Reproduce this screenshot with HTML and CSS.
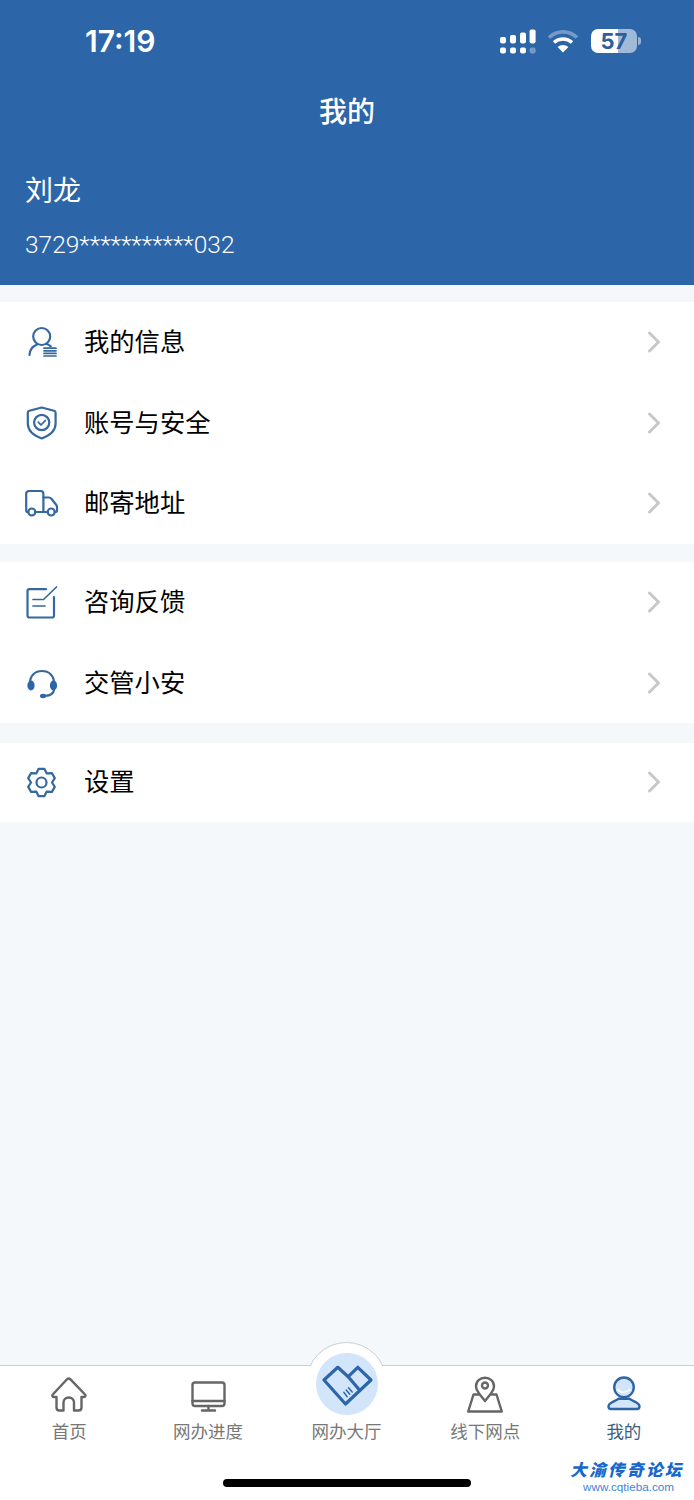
FILE: index.html
```html
<!DOCTYPE html>
<html lang="zh-CN">
<head>
  <meta charset="UTF-8" />
  <meta name="viewport" content="width=device-width, initial-scale=1.0" />
  <title>我的</title>
  <link rel="stylesheet" href="styles.css">
</head>
<body>

  <header class="header">
    <div class="status-bar">
      <span class="time">17:19</span>
      <div class="status-icons">
        <svg class="signal" width="36" height="25" viewBox="0 0 36 25" fill="#fff">
          <rect x="0" y="8" width="6" height="6.4" rx="1.8"/>
          <rect x="10" y="6" width="6" height="8.4" rx="1.8"/>
          <rect x="20" y="3.6" width="6" height="10.8" rx="1.8"/>
          <rect x="29.6" y="0.4" width="6" height="14" rx="1.8"/>
          <rect x="0" y="18.6" width="6" height="5.8" rx="1.8"/>
          <rect x="10" y="18.6" width="6" height="5.8" rx="1.8"/>
          <rect x="20" y="18.6" width="6" height="5.8" rx="1.8"/>
          <rect x="29.6" y="18.6" width="6" height="5.8" rx="1.8" opacity="0.35"/>
        </svg>
        <svg class="wifi" width="32" height="24" viewBox="0 0 32 24" fill="none">
          <path d="M2 8.5C10 1 22 1 30 8.5" stroke="#fff" stroke-opacity="0.35" stroke-width="3.6"/>
          <path d="M7 13.5C12 8.8 20 8.8 25 13.5" stroke="#fff" stroke-width="3.4"/>
          <path d="M16 23.5L10.6 18C13.6 15.2 18.4 15.2 21.4 18Z" fill="#fff"/>
        </svg>
        <div class="battery"><span class="battery-num">57</span></div>
        <span class="battery-nub"></span>
      </div>
    </div>
    <h1 class="title">我的</h1>
    <div class="user-name">刘龙</div>
    <div class="user-id">3729***********032</div>
  </header>

  <main class="content">
    <section class="group">
      <a class="row">
        <svg class="row-icon" viewBox="0 0 36 36" fill="none">
          <circle cx="17.7" cy="12.5" r="8.5"/>
          <path d="M5.5 31C5.5 26 8.5 22.5 13 20.5M22.5 20C24 20.5 25.5 21.4 26.8 22.4"/>
          <path class="thin" d="M20 24.2H32M20 26.8H32M20 29.4H32M20 32H32"/>
        </svg>
        <span class="row-label">我的信息</span>
        <svg class="chevron" width="14" height="22" viewBox="0 0 14 22"><path d="M2.5 2L11.5 11L2.5 20"/></svg>
      </a>
      <a class="row">
        <svg class="row-icon" viewBox="0 0 36 36" fill="none">
          <path d="M17.7 2.5L30 5.8C31 6.1 31.6 6.8 31.6 7.8V18.5C31.6 26 25 30.8 17.7 33.5C10.4 30.8 3.8 26 3.8 18.5V7.8C3.8 6.8 4.4 6.1 5.4 5.8Z"/>
          <circle cx="17.7" cy="17.5" r="7.6"/>
          <path class="thin" d="M14.2 17.2L17 20L21.4 15.4"/>
        </svg>
        <span class="row-label">账号与安全</span>
        <svg class="chevron" width="14" height="22" viewBox="0 0 14 22"><path d="M2.5 2L11.5 11L2.5 20"/></svg>
      </a>
      <a class="row">
        <svg class="row-icon" viewBox="0 0 36 36" fill="none">
          <path d="M4.2 27H3.8C2.8 27 2.2 26.2 2.2 25.2V9C2.2 7 3.4 6 5.2 6H16.5C18.2 6 19.4 7 19.4 9V27H11.4"/>
          <path d="M19.4 12.5H25C26 12.5 26.8 13 27.4 13.8L32 19.5C32.6 20.3 33 21 33 22V25.2C33 26.4 32.2 27 31 27M23.5 27H19.4"/>
          <circle cx="7.8" cy="27" r="3.5"/>
          <circle cx="27.2" cy="27" r="3.5"/>
        </svg>
        <span class="row-label">邮寄地址</span>
        <svg class="chevron" width="14" height="22" viewBox="0 0 14 22"><path d="M2.5 2L11.5 11L2.5 20"/></svg>
      </a>
    </section>

    <section class="group">
      <a class="row">
        <svg class="row-icon" viewBox="0 0 36 36" fill="none">
          <path d="M22 5.2H5.5C4.2 5.2 3.5 6 3.5 7.2V31.5C3.5 32.8 4.2 33.5 5.5 33.5H28C29.2 33.5 30 32.8 30 31.5V13"/>
          <path class="thin" d="M9 15.5H18M9 22H21M19.5 15.5L32.5 3"/>
        </svg>
        <span class="row-label">咨询反馈</span>
        <svg class="chevron" width="14" height="22" viewBox="0 0 14 22"><path d="M2.5 2L11.5 11L2.5 20"/></svg>
      </a>
      <a class="row">
        <svg class="row-icon" viewBox="0 0 36 36" fill="none">
          <path d="M6 18C6 10.5 11 6 18 6C25 6 30 10.5 30 18"/>
          <ellipse class="solid" cx="7" cy="20.5" rx="3.6" ry="5"/>
          <ellipse class="solid" cx="29.5" cy="20.5" rx="3.6" ry="5"/>
          <path d="M30 25C29.5 28.5 26.5 30.5 21 30.8"/>
          <ellipse class="solid" cx="19" cy="31" rx="3" ry="2.2"/>
        </svg>
        <span class="row-label">交管小安</span>
        <svg class="chevron" width="14" height="22" viewBox="0 0 14 22"><path d="M2.5 2L11.5 11L2.5 20"/></svg>
      </a>
    </section>

    <section class="group group-last">
      <a class="row">
        <svg class="row-icon" viewBox="0 0 36 36" fill="none">
          <g transform="translate(17.5 18.5)">
            <polygon points="-2.9,13.7 2.9,13.7 5.25,9.1 10.4,9.37 13.3,4.33 10.5,0 13.3,-4.33 10.4,-9.37 5.25,-9.1 2.9,-13.7 -2.9,-13.7 -5.25,-9.1 -10.4,-9.37 -13.3,-4.33 -10.5,0 -13.3,4.33 -10.4,9.37 -5.25,9.1"/>
            <circle r="5"/>
          </g>
        </svg>
        <span class="row-label">设置</span>
        <svg class="chevron" width="14" height="22" viewBox="0 0 14 22"><path d="M2.5 2L11.5 11L2.5 20"/></svg>
      </a>
    </section>
  </main>

  <nav class="tabbar">
    <div class="tab">
      <svg class="tab-icon" viewBox="0 0 36 36" fill="none">
        <path d="M5.5 20V30.5C5.5 32.5 6.5 33.5 8.5 33.5H12.5V25.5C12.5 22.5 14.8 20.5 17.8 20.5C20.8 20.5 23 22.5 23 25.5V33.5H27.5C29.5 33.5 30.5 32.5 30.5 30.5V20H33C34.5 20 35 18.6 34 17.5L19.5 2.3C18.5 1.3 17 1.3 16 2.3L1.8 17.5C0.8 18.6 1.4 20 3 20Z"/>
      </svg>
      <span class="tab-label">首页</span>
    </div>
    <div class="tab">
      <svg class="tab-icon" viewBox="0 0 36 36" fill="none">
        <rect x="2.5" y="5.5" width="32" height="23.5" rx="2.5"/>
        <path d="M2.5 24H34.5M18.5 29V33.5M12 33.5H25"/>
      </svg>
      <span class="tab-label">网办进度</span>
    </div>
    <div class="tab tab-hall">
      <span class="hall-bump"></span>
      <div class="hall-circle">
        <svg width="62" height="62" viewBox="0 0 62 62" fill="none">
          <path class="hall-line" d="M8 27L21.8 14.3L32.2 23.7L41.8 14.3L55 27L29.5 51Z"/>
          <path class="hall-line" d="M32.2 23.7L43.5 37"/>
          <path class="hall-thin" d="M27.8 39.3L31.2 43.7M30.2 37L33.8 41.3M32.5 34.7L36.2 39"/>
        </svg>
      </div>
      <span class="tab-label">网办大厅</span>
    </div>
    <div class="tab">
      <svg class="tab-icon" viewBox="0 0 36 36" fill="none">
        <path d="M18 24L12 16.5C10 14 9 12 9 9.5C9 4.3 13 0.8 18 0.8C23 0.8 27 4.3 27 9.5C27 12 26 14 24 16.5Z"/>
        <circle cx="18" cy="8.5" r="3"/>
        <path d="M11.5 17.5H6.5L1.2 34.5H34.8L29.5 17.5H24.5"/>
      </svg>
      <span class="tab-label">线下网点</span>
    </div>
    <div class="tab tab-active">
      <svg class="tab-icon" viewBox="0 0 36 36" fill="none">
        <path class="me-fill" d="M2.5 29.5C2.5 25.5 8 25 12.5 21.8H23.5C28 25 33.5 25.5 33.5 29.5C33.5 31 32.5 32 31 32H5C3.5 32 2.5 31 2.5 29.5Z"/>
        <circle class="me-fill" cx="18" cy="10.3" r="9.8"/>
        <path class="me-thin" d="M12 12.5C14 16 20 16.5 23.5 12.5"/>
      </svg>
      <span class="tab-label">我的</span>
    </div>
    <div class="home-bar"></div>
    <div class="watermark">
      <span class="wm-title">大渝传奇论坛</span>
      <span class="wm-url">www.cqtieba.com</span>
    </div>
  </nav>

</body>
</html>
```

FILE: styles.css
```css
* {
  box-sizing: border-box;
}
body {
  margin: 0;
  width: 694px;
  height: 1500px;
  display: flex;
  flex-direction: column;
  overflow: hidden;
  background: #f4f8fa;
  font-family: "Noto Sans CJK SC", "Noto Sans", sans-serif;
}

/* header */
.header {
  height: 285px;
  background: #2c65a8;
  color: #fff;
  padding-top: 22px;
}
.status-bar {
  height: 38px;
  display: flex;
  align-items: center;
  padding-left: 85px;
  padding-right: 53px;
  justify-content: space-between;
}
.time {
  font-family: Inter, "Liberation Sans", sans-serif;
  font-size: 30px;
  font-weight: 600;
  line-height: 38px;
}
.status-icons {
  display: flex;
  align-items: center;
}
.signal {
  margin-right: 11px;
}
.wifi {
  margin-right: 12px;
}
.battery {
  width: 46px;
  height: 24px;
  border-radius: 7px;
  background: linear-gradient(90deg, #fff 0, #fff 58%, rgba(255,255,255,0.55) 58%);
  display: flex;
  align-items: center;
  justify-content: center;
}
.battery-num {
  font-family: Inter, "Liberation Sans", sans-serif;
  font-size: 22px;
  font-weight: 700;
  color: #2c5f9e;
  line-height: 24px;
}
.battery-nub {
  width: 3px;
  height: 8px;
  margin-left: 1px;
  border-radius: 0 3px 3px 0;
  background: rgba(255,255,255,0.5);
}
.title {
  margin: 28px 0 0;
  text-align: center;
  font-size: 28px;
  font-weight: 500;
  line-height: 44px;
}
.user-name {
  margin: 35px 0 0 25px;
  font-size: 28px;
  font-weight: 400;
  line-height: 44px;
}
.user-id {
  margin: 19px 0 0 25px;
  font-family: Roboto, "Liberation Sans", sans-serif;
  font-size: 24.5px;
  font-weight: 300;
  line-height: 30px;
}

/* list */
.content {
  flex: 1;
  padding-top: 17px;
}
.group {
  background: #fff;
  margin-bottom: 18px;
}
.group-last {
  margin-top: 20px;
}
.row {
  height: 80.6px;
  display: flex;
  align-items: center;
  padding: 0 33px 0 24px;
  gap: 24px;
}
.group-last .row {
  height: 79px;
}
.row-icon {
  width: 36px;
  height: 36px;
  flex: none;
  stroke: #34689f;
  stroke-width: 2.2;
  stroke-linecap: round;
  stroke-linejoin: round;
}
.row-icon .thin {
  stroke-width: 1.7;
}
.row-icon .solid {
  fill: #2c65a8;
  stroke: none;
}
.row-label {
  flex: 1;
  margin-bottom: 4px;
  font-size: 25.3px;
  color: #000;
  line-height: 36px;
}
.chevron {
  flex: none;
}
.chevron path {
  fill: none;
  stroke: #c8c8c8;
  stroke-width: 3;
  stroke-linecap: round;
  stroke-linejoin: round;
}

/* bottom tabs */
.tabbar {
  position: relative;
  height: 135px;
  flex: none;
  background: #fff;
  border-top: 1px solid #c9d0d3;
  padding-right: 0.8px;
  display: grid;
  grid-template-columns: repeat(5, 1fr);
}
.tab {
  position: relative;
  display: flex;
  flex-direction: column;
  align-items: center;
  padding-top: 11px;
}
.tab-icon {
  width: 36px;
  height: 36px;
  stroke: #666;
  stroke-width: 2.4;
  stroke-linejoin: round;
  stroke-linecap: round;
  overflow: visible;
}
.tab-label {
  margin-top: 5px;
  font-size: 17.5px;
  line-height: 26px;
  color: #777;
}
.tab-active .tab-label {
  color: #3d5f86;
}
.tab-active .tab-icon {
  stroke: #2d65a5;
  stroke-width: 2.4;
}
.me-fill {
  fill: #d3e5fa;
}
.tab-active .me-thin {
  stroke: #fff;
  stroke-width: 1.6;
}
.hall-bump {
  position: absolute;
  left: 50%;
  top: -24px;
  width: 81px;
  height: 81px;
  margin-left: -40.5px;
  border-radius: 50%;
  background: #fff;
  border: 1px solid #c9d0d3;
  clip-path: inset(0 0 57px 0);
}
.hall-circle {
  position: relative;
  width: 62px;
  height: 62px;
  margin-top: -24px;
  border-radius: 50%;
  background: #d3e5fa;
}
.tab-hall .tab-label {
  position: relative;
  margin-top: 3px;
}
.hall-line {
  stroke: #2c65a8;
  stroke-width: 3.2;
  stroke-linejoin: round;
  stroke-linecap: round;
}
.hall-thin {
  stroke: #2c65a8;
  stroke-width: 1.4;
  stroke-linecap: round;
}
.home-bar {
  position: absolute;
  left: 223px;
  top: 113px;
  width: 248px;
  height: 8px;
  border-radius: 4px;
  background: #000;
}
.watermark {
  position: absolute;
  right: 10px;
  top: 93px;
  width: 114px;
  display: flex;
  flex-direction: column;
  align-items: center;
}
.wm-title {
  font-size: 16.5px;
  font-weight: 900;
  font-style: italic;
  letter-spacing: 2.4px;
  line-height: 20px;
  color: #1668cc;
  white-space: nowrap;
}
.wm-url {
  font-family: "Liberation Sans", sans-serif;
  font-size: 11.7px;
  line-height: 15px;
  margin-left: 3px;
  color: #3b86d8;
}
```
